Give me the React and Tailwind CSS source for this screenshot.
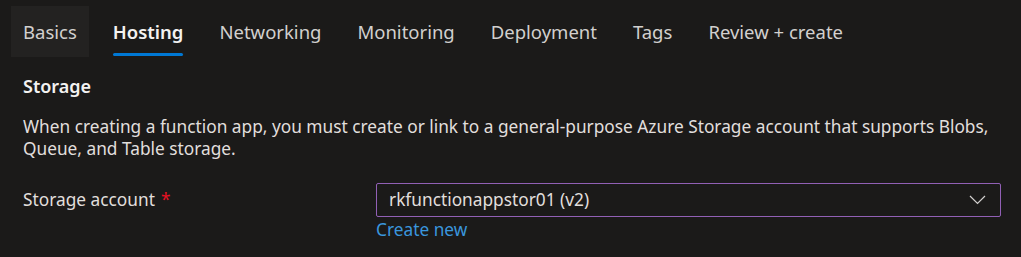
const tabs = ["Basics", "Hosting", "Networking", "Monitoring", "Deployment", "Tags", "Review + create"];

function Tab({ label, active, hovered }) {
  return (
    <div
      className={`h-[51px] px-3 flex items-center ${hovered ? "bg-[#232221]" : ""} ${
        active ? "text-[#f3f2f1] font-semibold" : "text-[#d2d0ce]"
      }`}
    >
      <span className="relative h-full flex items-center">
        {label}
        {active && <span className="absolute left-0 right-0 bottom-[1px] h-[3px] bg-[#0078d4] rounded-sm" />}
      </span>
    </div>
  );
}

export default function App() {
  return (
    <div
      className="w-[1021px] h-[257px] bg-[#1b1a19] text-[#f3f2f1] overflow-hidden"
      style={{ fontFamily: '"Noto Sans", "Open Sans", sans-serif' }}
    >
      <div className="flex gap-[12px] pl-[11px] pt-[6px] text-[18.5px]">
        {tabs.map((t, i) => (
          <Tab key={t} label={t} active={i === 1} hovered={i === 0} />
        ))}
      </div>

      <div className="pl-[23px]">
        <h2 className="mt-[18px] text-[18px] leading-[22px] font-semibold">Storage</h2>
        <p className="mt-[19px] text-[17.3px] leading-[22px] text-[#e1dfdd] w-[975px]">
          When creating a function app, you must create or link to a general-purpose Azure Storage account that supports Blobs,
          Queue, and Table storage.
        </p>

        <div className="mt-[23px] flex items-start">
          <div className="w-[353px] shrink-0 h-[34px] flex items-center text-[17.3px] text-[#e1dfdd]">
            Storage account<span className="text-[#e81123] ml-[6px]">*</span>
          </div>
          <div className="shrink-0">
            <div className="w-[625px] h-[34px] border border-[#9160b5] rounded-[2px] flex items-center justify-between pl-[12px] pr-[14px] text-[17.3px] text-[#e1dfdd]">
              <span>rkfunctionappstor01 (v2)</span>
              <svg width="17" height="10" viewBox="0 0 17 10" fill="none">
                <polyline points="1,1 8.5,8.5 16,1" stroke="#d2d0ce" strokeWidth="1.2" />
              </svg>
            </div>
            <div className="mt-[2px] text-[17.3px] leading-[22px] text-[#3a96dd]">Create new</div>
          </div>
        </div>
      </div>
    </div>
  );
}
